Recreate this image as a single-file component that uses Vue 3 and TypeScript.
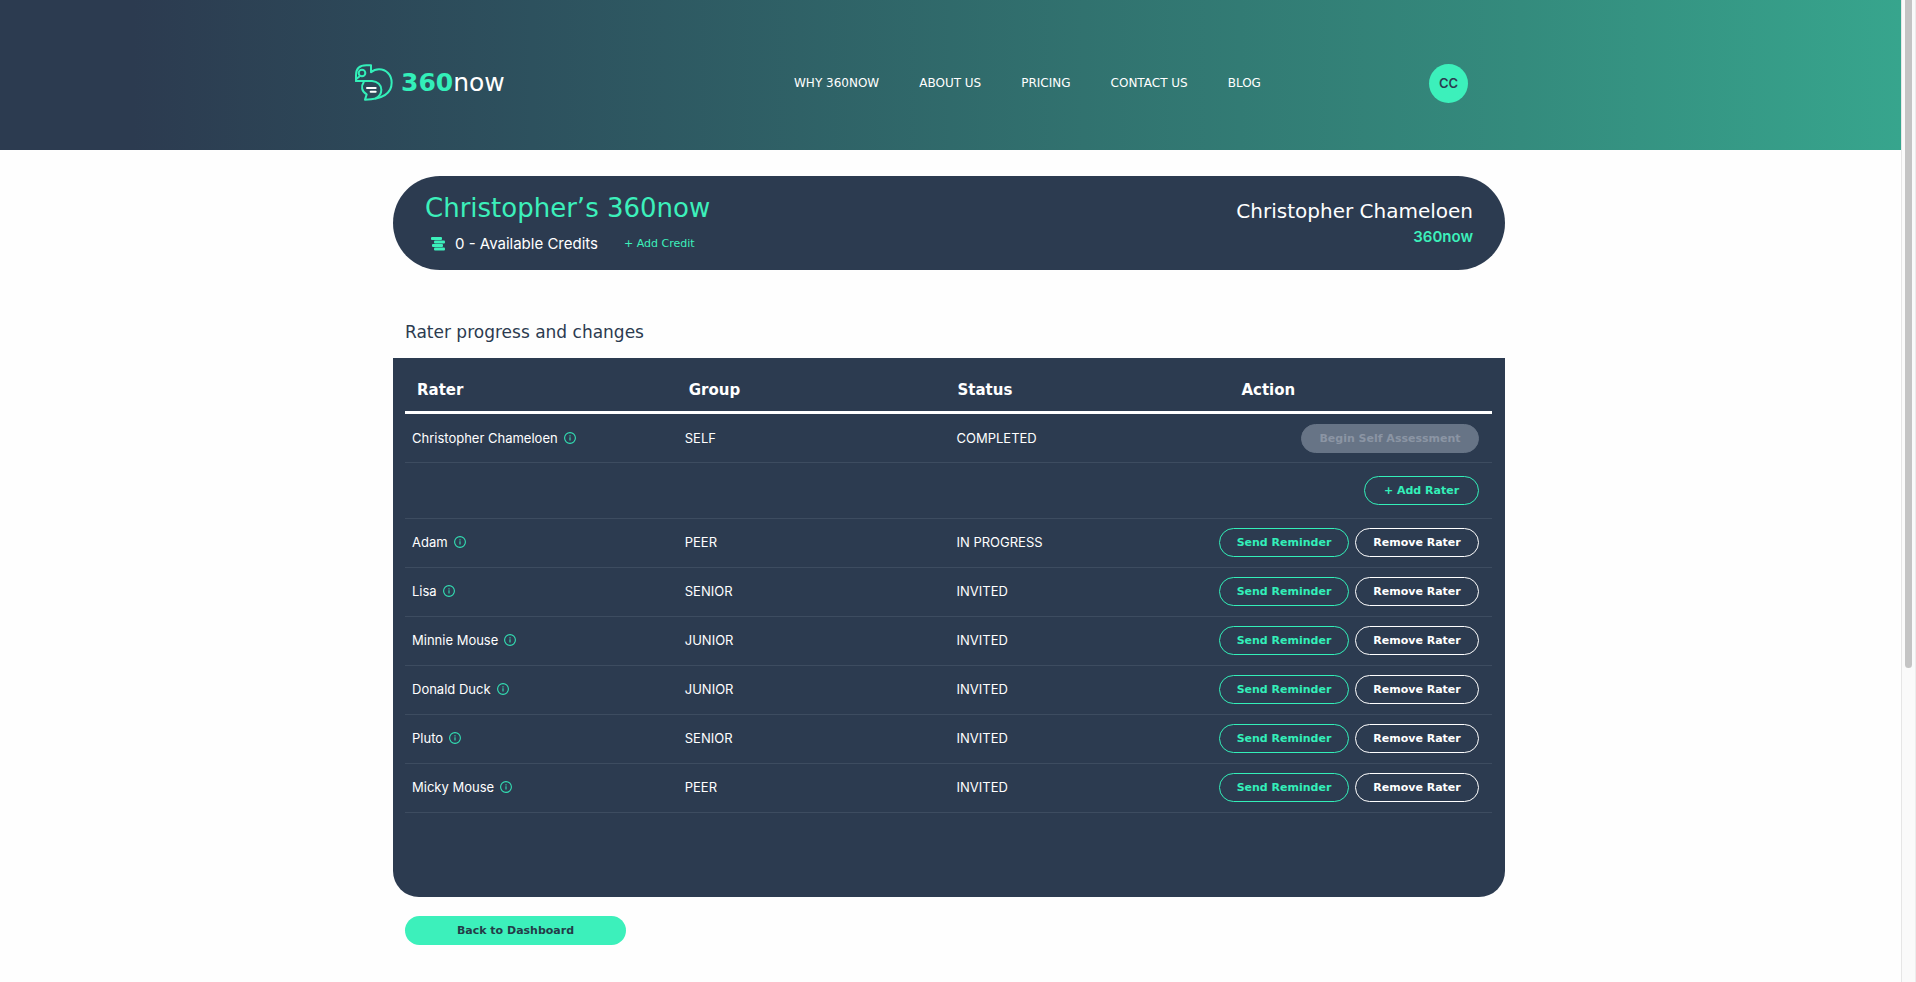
<script setup lang="ts">
interface Rater {
  name: string
  group: string
  status: string
}

const navLinks: string[] = ['WHY 360NOW', 'ABOUT US', 'PRICING', 'CONTACT US', 'BLOG']

const self: Rater = { name: 'Christopher Chameloen', group: 'SELF', status: 'COMPLETED' }

const raters: Rater[] = [
  { name: 'Adam', group: 'PEER', status: 'IN PROGRESS' },
  { name: 'Lisa', group: 'SENIOR', status: 'INVITED' },
  { name: 'Minnie Mouse', group: 'JUNIOR', status: 'INVITED' },
  { name: 'Donald Duck', group: 'JUNIOR', status: 'INVITED' },
  { name: 'Pluto', group: 'SENIOR', status: 'INVITED' },
  { name: 'Micky Mouse', group: 'PEER', status: 'INVITED' },
]
</script>

<template>
  <div class="window">
    <div class="page">
      <header class="site-header">
        <div class="header-inner">
          <a class="logo" href="#">
            <svg class="logo-mark" viewBox="0 0 114 112" fill="none" stroke="#33efb9" stroke-width="6" stroke-linejoin="round" stroke-linecap="round">
              <path d="M3 50V32C3 13 15 3 34 3H48V24C55 18 63 15 72 15C95 15 110 33 110 55C110 85 84 104 30 106L35 90C20 82 17 66 26 54" />
              <path d="M3 50H51C68 51 79 62 79 76C79 88 72 97 62 102" />
              <path d="M4 44L14 36" />
              <circle cx="21" cy="26" r="10" />
              <path d="M36 71h26M47 82h15" stroke="#fff" />
            </svg>
            <span class="wordmark"><b>360</b>now</span>
          </a>
          <nav class="nav">
            <a v-for="link in navLinks" :key="link" href="#">{{ link }}</a>
          </nav>
          <button class="avatar" type="button">CC</button>
        </div>
      </header>

      <main class="main">
        <section class="summary">
          <div>
            <h1 class="team">Christopher’s 360now</h1>
            <div class="credits">
              <svg class="coins" viewBox="0 0 28 28" fill="#3cf0bb">
                <rect x="0" y="0" width="22" height="6" rx="2" />
                <rect x="6" y="7" width="22" height="6" rx="2" />
                <rect x="2" y="14" width="22" height="6" rx="2" />
                <rect x="6" y="21" width="22" height="6" rx="2" />
              </svg>
              <span>0 - Available Credits</span>
              <a class="add-credit" href="#">+ Add Credit</a>
            </div>
          </div>
          <div class="owner">
            <h2>Christopher Chameloen</h2>
            <p>360now</p>
          </div>
        </section>

        <h2 class="section-title">Rater progress and changes</h2>

        <section class="panel">
          <table class="raters">
            <thead>
              <tr>
                <th class="col-rater" scope="col">Rater</th>
                <th class="col-group" scope="col">Group</th>
                <th class="col-status" scope="col">Status</th>
                <th class="col-action" scope="col">Action</th>
              </tr>
            </thead>
            <tbody>
              <tr>
                <td>
                  <span class="name">{{ self.name }}
                    <svg class="info" viewBox="0 0 12 12" fill="none" stroke="#33e0b4"><circle cx="6" cy="6" r="5.4" stroke-width="1.1" /><path d="M6 5.3v3.2M6 3.3v1.1" stroke-width="1.1" /></svg>
                  </span>
                </td>
                <td>{{ self.group }}</td>
                <td>{{ self.status }}</td>
                <td><div class="actions"><button class="btn begin" type="button" disabled>Begin Self Assessment</button></div></td>
              </tr>
              <tr class="add-row">
                <td colspan="4"><div class="actions"><button class="btn add" type="button">+ Add Rater</button></div></td>
              </tr>
              <tr v-for="rater in raters" :key="rater.name" class="rater-row">
                <td>
                  <span class="name">{{ rater.name }}
                    <svg class="info" viewBox="0 0 12 12" fill="none" stroke="#33e0b4"><circle cx="6" cy="6" r="5.4" stroke-width="1.1" /><path d="M6 5.3v3.2M6 3.3v1.1" stroke-width="1.1" /></svg>
                  </span>
                </td>
                <td>{{ rater.group }}</td>
                <td>{{ rater.status }}</td>
                <td>
                  <div class="actions">
                    <button class="btn send" type="button">Send Reminder</button>
                    <button class="btn remove" type="button">Remove Rater</button>
                  </div>
                </td>
              </tr>
            </tbody>
          </table>
        </section>

        <button class="back" type="button">Back to Dashboard</button>
      </main>
    </div>
    <div class="scroll-rail"><div class="scroll-thumb"></div></div>
  </div>
</template>

<style>
body {
  margin: 0;
  background: #fefefe;
}
</style>

<style scoped>
* {
  box-sizing: border-box;
}

.window {
  display: flex;
  min-height: 100vh;
  font-family: Inter, "Liberation Sans", sans-serif;
  color: #fff;
}

.page {
  flex: 1;
  min-width: 0;
}

h1,
h2,
p {
  margin: 0;
}

h1,
h2,
th,
button,
.wordmark,
.nav,
.add-credit {
  font-family: "DejaVu Sans", Verdana, sans-serif;
}

a {
  color: inherit;
  text-decoration: none;
}

button {
  padding: 0;
  border: 0;
  cursor: pointer;
}

.site-header {
  padding: 0 19px 0 16px;
  background: linear-gradient(90deg, #2c3b50 0%, #2c3b50 7%, #2d515e 28%, #31726f 57%, #348b7d 80%, #37a58d 100%);
}

.header-inner {
  display: grid;
  grid-template-columns: 439px auto 1fr;
  align-items: center;
  max-width: 1188px;
  height: 150px;
  margin: 0 auto;
  padding: 16px 75px 0 0;
}

.logo {
  display: flex;
  align-items: center;
  gap: 8px;
}

.logo-mark {
  width: 38px;
  height: 38px;
}

.wordmark {
  font-size: 25px;
  line-height: 32px;
}

.wordmark b {
  color: #33efb9;
}

.nav {
  display: flex;
  gap: 40px;
  font-size: 12px;
  line-height: 16px;
  white-space: nowrap;
}

.avatar {
  justify-self: end;
  width: 39px;
  height: 39px;
  border-radius: 50%;
  background: #3cf0bb;
  color: #2c3b50;
  font: 600 13px Inter, sans-serif;
}

.main {
  max-width: 1147px;
  margin: 0 auto;
  padding: 26px 19px 36px 16px;
}

.summary {
  display: flex;
  justify-content: space-between;
  padding: 16px 32px;
  height: 94px;
  border-radius: 47px;
  background: #2c3b50;
}

.team {
  font-size: 26px;
  line-height: 32px;
  font-weight: 400;
  color: #3cf0bb;
}

.credits {
  display: flex;
  align-items: center;
  margin-top: 8px;
  padding-left: 6px;
  font-size: 15px;
  line-height: 24px;
}

.coins {
  width: 14px;
  height: 14px;
  margin-right: 10px;
}

.add-credit {
  margin-left: 26px;
  font-size: 11px;
  color: #3cf0bb;
}

.owner {
  padding-top: 7px;
  text-align: right;
}

.owner h2 {
  font-size: 20px;
  line-height: 24px;
  font-weight: 400;
}

.owner p {
  margin-top: 2px;
  font-size: 15px;
  line-height: 24px;
  font-weight: 600;
  color: #3cf0bb;
}

.section-title {
  margin: 50px 0 14px 12px;
  font-size: 17px;
  line-height: 24px;
  font-weight: 400;
  color: #2c3b50;
}

.panel {
  padding: 0 13px 84px 12px;
  border-radius: 0 0 26px 26px;
  background: #2c3b50;
}

.raters {
  width: 100%;
  table-layout: fixed;
  border-spacing: 0;
  font-size: 13px;
  line-height: 16px;
}

th {
  height: 56px;
  padding: 10px 0 0 12px;
  border-bottom: 3px solid #fff;
  font-size: 15px;
  text-align: left;
}

.col-rater,
.col-group {
  width: 25%;
}

.col-status {
  width: 24%;
  padding-left: 9px;
}

.col-action {
  padding-left: 32px;
}

td {
  height: 49px;
  padding: 0 0 0 8px;
  border-bottom: 1px solid #3d4c60;
}

td:first-child {
  padding-left: 7px;
}

.add-row td {
  height: 56px;
}

.rater-row td {
  padding-bottom: 2px;
}

.name {
  display: flex;
  align-items: center;
  gap: 6px;
}

.info {
  width: 12px;
  height: 12px;
}

.actions {
  display: flex;
  justify-content: flex-end;
  gap: 6px;
  padding-right: 13px;
}

.btn {
  height: 29px;
  border: 1px solid #33efb9;
  border-radius: 15px;
  background: transparent;
  font-size: 11px;
  font-weight: 700;
  white-space: nowrap;
  color: #33efb9;
}

.begin {
  width: 178px;
  border-color: #677486;
  background: #677486;
  color: #8b95a4;
}

.add {
  width: 115px;
}

.send {
  width: 130px;
}

.remove {
  width: 124px;
  border-color: #fff;
  color: #fff;
}

.back {
  display: block;
  width: 221px;
  height: 29px;
  margin: 19px 0 0 12px;
  border-radius: 15px;
  background: #3cf0bb;
  font-size: 11px;
  font-weight: 700;
  color: #243c48;
}

.scroll-rail {
  flex: none;
  width: 15px;
  padding: 0 3px;
  border-left: 1px solid #e6e6e6;
  border-right: 1px solid #ececec;
  background: #fafafa;
}

.scroll-thumb {
  height: 68vh;
  border-radius: 0 0 4px 4px;
  background: #c4c4c4;
}
</style>
